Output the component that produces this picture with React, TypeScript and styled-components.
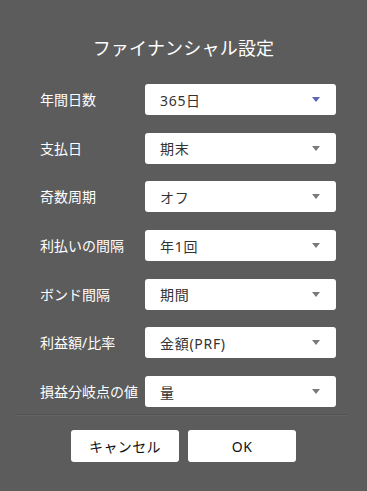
import React from 'react';
import styled, { createGlobalStyle } from 'styled-components';

const GlobalStyle = createGlobalStyle`
  html, body {
    margin: 0;
    padding: 0;
    background: #5c5c5c;
  }
  body {
    font-family: "Noto Sans", "Noto Sans CJK JP", sans-serif;
  }
`;

interface Field {
  label: string;
  value: string;
  focused?: boolean;
}

const fields: Field[] = [
  { label: '年間日数', value: '365日', focused: true },
  { label: '支払日', value: '期末' },
  { label: '奇数周期', value: 'オフ' },
  { label: '利払いの間隔', value: '年1回' },
  { label: 'ボンド間隔', value: '期間' },
  { label: '利益額/比率', value: '金額(PRF)' },
  { label: '損益分岐点の値', value: '量' },
];

const Dialog = styled.div`
  width: 367px;
  height: 491px;
  box-sizing: border-box;
  background: #5c5c5c;
  padding-top: 36px;
  display: flex;
  flex-direction: column;
`;

const Title = styled.h1`
  margin: 0;
  height: 25px;
  line-height: 25px;
  font-size: 18px;
  font-weight: 400;
  color: #ffffff;
  text-align: center;
  letter-spacing: 0.2px;
`;

const Form = styled.div`
  margin-top: 23px;
  padding: 0 31px 0 40px;
  display: grid;
  grid-template-columns: 105px 191px;
  row-gap: 17.7px;
`;

const Label = styled.label`
  font-size: 14px;
  color: #ffffff;
  line-height: 31px;
  white-space: nowrap;
`;

const Select = styled.div`
  height: 31px;
  background: #ffffff;
  border-radius: 3px;
  display: flex;
  align-items: center;
  padding: 0 15px;
  box-sizing: border-box;
  font-size: 14px;
  color: #333333;
  cursor: pointer;
`;

const Value = styled.span`
  flex: 1;
  letter-spacing: 0.7px;
`;

const Arrow = styled.span<{ $active?: boolean }>`
  width: 0;
  height: 0;
  border-left: 4.5px solid transparent;
  border-right: 4.5px solid transparent;
  border-top: 5px solid ${(p) => (p.$active ? '#5a66b8' : '#7a7a7a')};
  margin-right: 1px;
`;

const Divider = styled.div`
  margin: 7px 19px 0 17px;
  height: 0;
  border-top: 1px solid #525252;
  border-bottom: 1px solid #646464;
`;

const Buttons = styled.div`
  margin-top: 14px;
  display: flex;
  justify-content: center;
  gap: 9px;
`;

const Button = styled.button`
  width: 108px;
  height: 32px;
  border: none;
  border-radius: 3px;
  background: #ffffff;
  color: #111111;
  font-family: "Noto Sans", "Noto Sans CJK JP", sans-serif;
  font-size: 14px;
  letter-spacing: 0.4px;
  padding: 0;
  cursor: pointer;
`;

export default function App() {
  return (
    <>
      <GlobalStyle />
      <Dialog>
        <Title>ファイナンシャル設定</Title>
        <Form>
          {fields.map((f) => (
            <React.Fragment key={f.label}>
              <Label>{f.label}</Label>
              <Select>
                <Value>{f.value}</Value>
                <Arrow $active={f.focused} />
              </Select>
            </React.Fragment>
          ))}
        </Form>
        <Divider />
        <Buttons>
          <Button>キャンセル</Button>
          <Button>OK</Button>
        </Buttons>
      </Dialog>
    </>
  );
}
